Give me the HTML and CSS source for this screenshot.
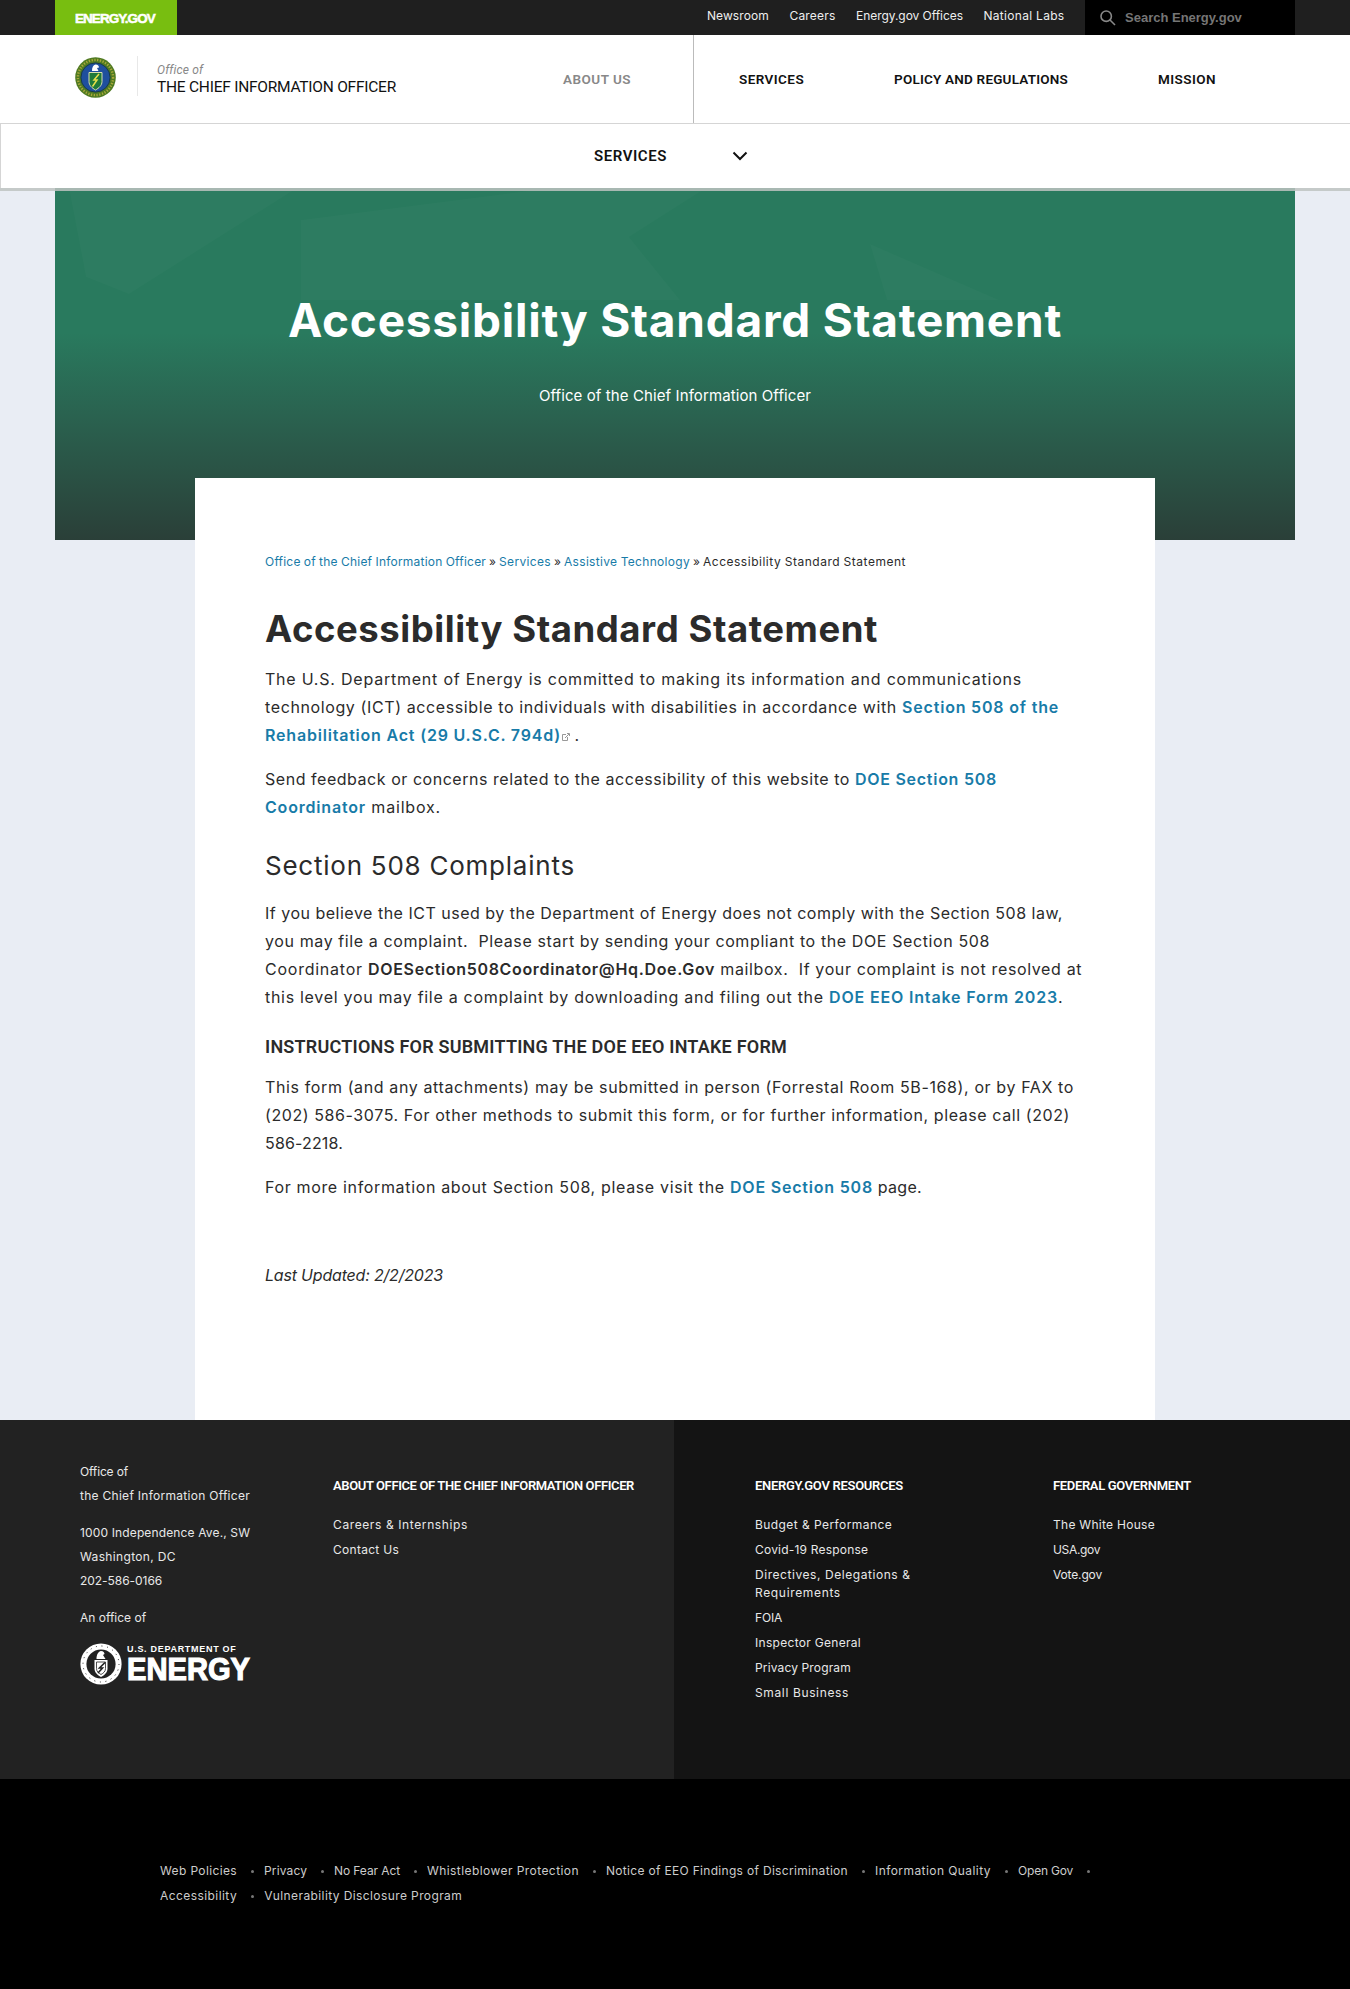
FILE: index.html
```html
<!DOCTYPE html>
<html lang="en">
<head>
<meta charset="utf-8">
<title>Accessibility Standard Statement | Department of Energy</title>
<link rel="stylesheet" href="styles.css">
</head>
<body>
<div class="topbar">
  <a class="brand">ENERGY.GOV</a>
  <nav class="topnav"><a class="ls-10">Newsroom</a><a class="ls-20">Careers</a><a class="ln-4">Energy.gov Offices</a><a class="ls-30">National Labs</a></nav>
  <div class="search">
    <svg width="16" height="16" viewBox="0 0 16 16"><circle cx="6.2" cy="6.2" r="5.2"/><path d="M10 10l5 5"/></svg>
    <span>Search Energy.gov</span>
  </div>
</div>
<header class="header">
  <svg class="seal" width="42" height="42" viewBox="0 0 42 42">
    <circle cx="20.500" cy="20.500" r="20.300" fill="#4f7a22"/>
    <circle cx="20.500" cy="20.500" r="17.600" fill="none" stroke="#a9a83a" stroke-width="2.400" stroke-dasharray="1.300 1.500"/>
    <circle cx="20.500" cy="20.500" r="14.600" fill="#1f4f9e" stroke="#173a4a" stroke-width="1"/>
    <path d="M14 15.500h13v9c0 4-3 6.500-6.500 8.500-3.500-2-6.500-4.500-6.500-8.500z" fill="#1f7a3a" stroke="#d8dfae" stroke-width="1"/>
    <path d="M24 17L19 23h3l-4.500 6.500" fill="none" stroke="#e8e04a" stroke-width="1.500"/>
    <path d="M17 14c0-3.500 1-6 3.500-6.500 2.500 0 3.500 1.500 3.500 3l-2 .500 1.500 3z" fill="#fff"/>
  </svg>
  <div class="office"><em class="ls-14">Office of</em><span class="ln-24">THE CHIEF INFORMATION OFFICER</span></div>
  <div class="about"><a class="ls-48">ABOUT US</a></div>
  <nav class="mainnav"><a class="ls-43">SERVICES</a><a class="ls-20">POLICY AND REGULATIONS</a><a class="ls-43">MISSION</a></nav>
</header>
<div class="subnav">
  <span class="ls-56">SERVICES</span>
  <svg width="16" height="10" viewBox="0 0 16 10"><path d="M1.500 1.500L8 8l6.500-6.500"/></svg>
</div>
<section class="hero">
  <svg class="facets" width="1240" height="352" viewBox="0 0 1240 352">
    <path d="M14 0h228L74 106 31 89zM246 32L496 0h155l-77 49 51 63H350l43-43-43 43H246zM815 56l129 56H832z"/>
  </svg>
  <h1 class="ls-75">Accessibility Standard Statement</h1>
  <p class="ls-10">Office of the Chief Information Officer</p>
</section>
<main class="card">
  <nav class="crumbs"><a class="ls-22">Office of the Chief Information Officer</a> » <a class="ls-34">Services</a> » <a class="ls-31">Assistive Technology</a> » <span class="ls-52">Accessibility Standard Statement</span></nav>
  <h1 class="ls-56">Accessibility Standard Statement</h1>
  <p><span class="ls-78">The U.S. Department of Energy is committed to making its information and communications</span><br><span class="ls-61">technology (ICT) accessible to individuals with disabilities in accordance with </span><a class="ls-81">Section 508 of the</a><br><a class="ls-80">Rehabilitation Act (29 U.S.C. 794d)</a><svg class="ext" width="8" height="8" viewBox="0 0 8 8"><path d="M4 1.500H.500v6h5V4M3 5l4-4M5 .500h2.500V3"/></svg> .</p>
  <p><span class="ls-54">Send feedback or concerns related to the accessibility of this website to </span><a class="ls-73">DOE Section 508</a><br><a class="ls-82">Coordinator</a><span class="ls-82"> mailbox.</span></p>
  <h2 class="ls-76">Section 508 Complaints</h2>
  <p><span class="ls-50">If you believe the ICT used by the Department of Energy does not comply with the Section 508 law,</span><br><span class="ls-60">you may file a complaint.&nbsp; Please start by sending your compliant to the DOE Section 508</span><br><span class="ls-76">Coordinator </span><b class="ls-66">DOESection508Coordinator@Hq.Doe.Gov</b><span class="ls-63"> mailbox.&nbsp; If your complaint is not resolved at</span><br><span class="ls-70">this level you may file a complaint by downloading and filing out the </span><a class="ls-83">DOE EEO Intake Form 2023</a>.</p>
  <h3 class="ls-22">INSTRUCTIONS FOR SUBMITTING THE DOE EEO INTAKE FORM</h3>
  <p><span class="ls-62">This form (and any attachments) may be submitted in person (Forrestal Room 5B-168), or by FAX to</span><br><span class="ls-59">(202) 586-3075. For other methods to submit this form, or for further information, please call (202)</span><br><span class="ls-16">586-2218.</span></p>
  <p><span class="ls-65">For more information about Section 508, please visit the </span><a class="ls-80">DOE Section 508</a><span class="ls-30"> page.</span></p>
  <p class="updated"><em class="ln-19">Last Updated: 2/2/2023</em></p>
</main>
<footer class="footer">
  <section class="dark">
    <div class="address">
      <p><span class="ln-15">Office of</span><br><span class="ls-28">the Chief Information Officer</span></p>
      <p><span class="ls-14">1000 Independence Ave., SW</span><br><span class="ls-34">Washington, DC</span><br><span class="ln-4">202-586-0166</span></p>
      <p>An office of</p>
      <div class="doe">
        <svg width="42" height="42" viewBox="0 0 42 42">
          <circle cx="21" cy="21" r="20.600" fill="#fff"/>
          <circle cx="21" cy="21" r="18" fill="none" stroke="#222" stroke-width="1" stroke-dasharray="1 4.650"/>
          <circle cx="21" cy="21" r="14.600" fill="#222"/>
          <path d="M14.500 17h13v8.500c0 4-3 6.500-6.500 8.500-3.500-2-6.500-4.500-6.500-8.500z" fill="#fff"/>
          <path d="M16.500 19h9v6.500c0 3-2 4.500-4.500 6-2.500-1.500-4.500-3-4.500-6z" fill="none" stroke="#222" stroke-width=".8"/>
          <path d="M25 19.500l-5.500 5.500h3L18 30" fill="none" stroke="#222" stroke-width="1.600"/>
          <path d="M16.500 16c0-4 1.500-7.500 4.500-8 2.500 0 3.500 1.500 3.500 3l-1.500 1 2.500 4z" fill="#fff"/>
        </svg>
        <div class="doename"><span class="dept">U.S. DEPARTMENT OF</span><span class="energy">ENERGY</span></div>
      </div>
    </div>
    <div class="links">
      <h4 class="ln-38">ABOUT OFFICE OF THE CHIEF INFORMATION OFFICER</h4>
      <ul><li class="ls-61">Careers &amp; Internships</li><li class="ls-28">Contact Us</li></ul>
    </div>
  </section>
  <section class="darker">
    <div class="links">
      <h4 class="ln-28">ENERGY.GOV RESOURCES</h4>
      <ul><li class="ls-43">Budget &amp; Performance</li><li class="ls-20">Covid-19 Response</li><li class="ls-56">Directives, Delegations &amp;<br><span class="ls-66">Requirements</span></li><li class="ln-19">FOIA</li><li class="ls-30">Inspector General</li><li class="ls-14">Privacy Program</li><li class="ls-63">Small Business</li></ul>
    </div>
    <div class="links">
      <h4 class="ln-34">FEDERAL GOVERNMENT</h4>
      <ul><li class="ls-28">The White House</li><li class="ln-34">USA.gov</li><li class="ln-15">Vote.gov</li></ul>
    </div>
  </section>
</footer>
<div class="legal">
  <ul>
    <li><a class="ls-36">Web Policies</a></li><li><a class="ls-14">Privacy</a></li><li><a class="ln-10">No Fear Act</a></li><li><a class="ls-43">Whistleblower Protection</a></li><li><a class="ls-31">Notice of EEO Findings of Discrimination</a></li><li><a class="ls-43">Information Quality</a></li><li><a class="ln-19">Open Gov</a></li>
  </ul>
  <ul><li><a class="ls-43">Accessibility</a></li><li><a class="ls-40">Vulnerability Disclosure Program</a></li></ul>
</div>
</body>
</html>
```
FILE: styles.css
```css
* { box-sizing: border-box; }
body { margin: 0; background: #e9edf4; font-family: Inter, sans-serif; color: #2b2b2b; white-space: nowrap; }
h1, h2, h3, h4, p, ul { margin: 0; padding: 0; }
ul { list-style: none; }

/* Top bar */
.topbar { display: flex; height: 35px; padding: 0 55px; background: #1f1f1f; }
.brand { width: 122px; padding-left: 20px; background: #78be10; color: #fff; font: bold 13.5px/37px "Liberation Sans", sans-serif; -webkit-text-stroke: .5px #fff; letter-spacing: -.95px; }
.topnav { display: flex; gap: 20.5px; margin-left: auto; padding-right: 20.5px; font-size: 12px; line-height: 32px; color: #eee; }
.search { display: flex; align-items: center; gap: 9px; width: 210px; padding-left: 15px; background: #000; color: #757575; font: bold 13px/36px "Liberation Sans", sans-serif; }
.search svg { fill: none; stroke: #888; stroke-width: 1.6; }

/* Office header */
.header { display: flex; height: 88px; background: #fff; padding-left: 75px; font-family: Roboto, sans-serif; }
.seal { margin-top: 22px; }
.office { display: flex; flex-direction: column; align-items: flex-start; height: 40px; margin: 21px 0 0 20px; padding-left: 19px; width: 426px; border-left: 1px solid #e8e8e8; }
.office em { font-size: 12px; line-height: 14px; padding-top: 7px; color: #888; }
.office span { font-size: 15.5px; line-height: 20px; color: #111; }
.about { width: 131px; border-right: 1px solid #bbb; font-size: 13.5px; line-height: 88px; font-weight: 600; color: #888; }
.mainnav { display: flex; margin-left: 45px; gap: 90px; font-size: 13.5px; line-height: 88px; font-weight: 600; color: #111; }

.subnav { position: relative; display: flex; align-items: center; height: 65px; padding-left: 593px; background: #fff; border: 1px solid #d5d5d5; border-width: 1px 0 0 1px; box-shadow: 0 3px 0 rgba(190,195,193,.85); font: 600 15px Roboto, sans-serif; color: #111; z-index: 1; }
.subnav svg { margin-left: 65px; fill: none; stroke: #111; stroke-width: 2; }

/* Hero */
.hero { position: relative; height: 352px; margin: 0 55px; padding-top: 102px; text-align: center; color: #fff; background: linear-gradient(#297a5e 0, #297a5e 145px, #2a6350 225px, #2a3f38 352px); }
.facets { position: absolute; left: 0; top: 0; fill: rgba(255,255,255,.018); }
.hero h1 { font-size: 46px; line-height: 60px; font-weight: 700; }
.hero p { font-size: 15px; line-height: 24px; padding-top: 34px; }

/* Article card */
.card { width: 960px; height: 942px; margin: -62px auto 0; padding: 70px; background: #fff; position: relative; }
.card a { color: #187ba8; }
.crumbs { font-size: 12px; line-height: 28px; word-spacing: -.4px; }
.card h1 { margin: 33px 0 16px; font-size: 36.5px; line-height: 40px; font-weight: 700; }
.card p { margin-bottom: 16px; font-size: 16px; line-height: 28px; }
.card p a, .card b { font-weight: 600; }
.card h2 { margin: 30px 0 18px; font-size: 26px; line-height: 30px; font-weight: 400; }
.card h3 { margin: 25px 0 15px; font: 600 18px/22px Roboto, sans-serif; }
.card .updated { margin-top: 60px; }
.ext { margin-left: 1px; fill: none; stroke: #999; }

/* Footer */
.footer { display: grid; grid-template-columns: 1fr 1fr; height: 359px; font-size: 12px; color: #e8e8e8; }
.dark { display: flex; background: #222; padding: 40px 0 0 80px; }
.darker { display: flex; background: #141414; padding: 40px 0 0 80px; }
.address { width: 253px; line-height: 24px; }
.address p { margin-bottom: 13px; }
.doe { display: flex; gap: 5px; }
.doename { display: flex; flex-direction: column; align-items: flex-start; color: #fff; font-family: "Liberation Sans", sans-serif; font-weight: bold; }
.dept { font-size: 9px; line-height: 12px; letter-spacing: .7px; }
.energy { font-size: 32px; line-height: 28px; transform: scaleX(.91); transform-origin: left; -webkit-text-stroke: 1.2px #fff; }
.links { width: 298px; line-height: 18px; }
.links h4 { margin: 17px 0 21px; font: 600 13px/18px Roboto, sans-serif; color: #fff; }
.links li { margin-bottom: 7px; }
.darker .links { padding-left: 1px; }

.legal { height: 210px; background: #000; padding: 79px 160px 0; font-size: 12px; line-height: 25px; color: #ccc; }
.legal ul { display: flex; }
.legal li:not(:last-child)::after, .legal ul:first-child li::after { content: ""; display: inline-block; width: 3px; height: 3px; margin: 0 10px 2px 14px; background: #777; border-radius: 50%; }

/* Letter tracking, in hundredths of a pixel */
.ls-10 { letter-spacing: .1px; }
.ls-14 { letter-spacing: .14px; }
.ls-16 { letter-spacing: .16px; }
.ls-20 { letter-spacing: .2px; }
.ls-22 { letter-spacing: .217px; }
.ls-28 { letter-spacing: .28px; }
.ls-30 { letter-spacing: .3px; }
.ls-31 { letter-spacing: .313px; }
.ls-34 { letter-spacing: .345px; }
.ls-36 { letter-spacing: .363px; }
.ls-40 { letter-spacing: .4px; }
.ls-43 { letter-spacing: .43px; }
.ls-48 { letter-spacing: .48px; }
.ls-50 { letter-spacing: .503px; }
.ls-52 { letter-spacing: .516px; }
.ls-54 { letter-spacing: .539px; }
.ls-56 { letter-spacing: .56px; }
.ls-59 { letter-spacing: .586px; }
.ls-60 { letter-spacing: .605px; }
.ls-61 { letter-spacing: .611px; }
.ls-62 { letter-spacing: .619px; }
.ls-63 { letter-spacing: .633px; }
.ls-65 { letter-spacing: .654px; }
.ls-66 { letter-spacing: .66px; }
.ls-70 { letter-spacing: .703px; }
.ls-73 { letter-spacing: .732px; }
.ls-75 { letter-spacing: .751px; }
.ls-76 { letter-spacing: .76px; }
.ls-78 { letter-spacing: .778px; }
.ls-80 { letter-spacing: .8px; }
.ls-81 { letter-spacing: .811px; }
.ls-82 { letter-spacing: .818px; }
.ls-83 { letter-spacing: .837px; }
.ln-4 { letter-spacing: -.045px; }
.ln-10 { letter-spacing: -.1px; }
.ln-15 { letter-spacing: -.15px; }
.ln-19 { letter-spacing: -.19px; }
.ln-24 { letter-spacing: -.238px; }
.ln-28 { letter-spacing: -.284px; }
.ln-34 { letter-spacing: -.34px; }
.ln-38 { letter-spacing: -.383px; }
```
